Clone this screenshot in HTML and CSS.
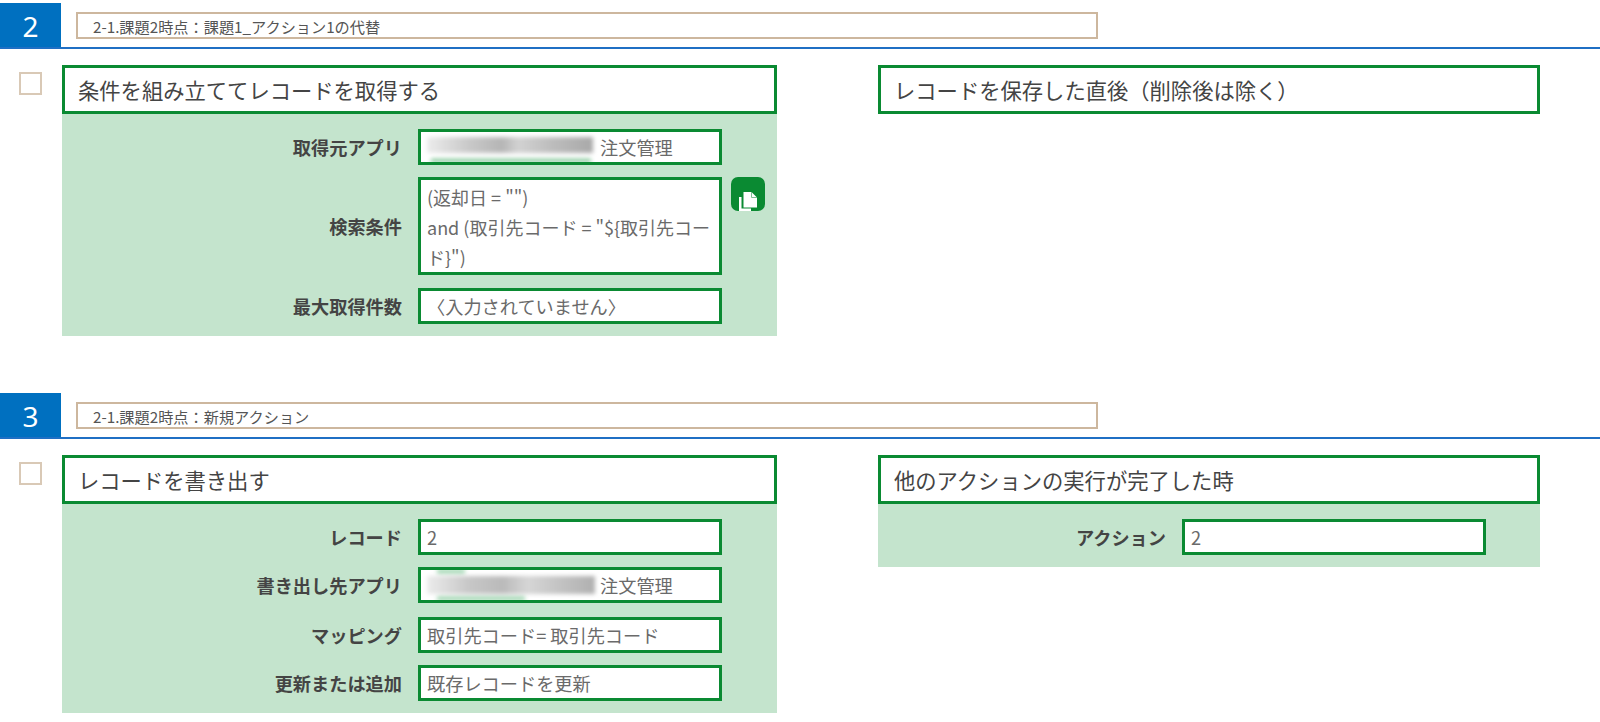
FILE: index.html
```html
<!DOCTYPE html>
<html lang="ja">
<head>
<meta charset="utf-8">
<title>Actions</title>
<link rel="stylesheet" href="styles.css">
</head>
<body>
<section class="step step-first">
  <header class="step-head">
    <div class="step-no">2</div>
    <div class="step-title">2-1.課題2時点：課題1_アクション1の代替</div>
  </header>
  <div class="step-body">
    <div class="check"></div>
    <div class="card card-left">
      <h2 class="card-head">条件を組み立ててレコードを取得する</h2>
      <div class="card-body">
        <div class="row">
          <div class="label">取得元アプリ</div>
          <div class="field"><span class="smear smear-a"></span><span>注文管理</span></div>
        </div>
        <div class="row">
          <div class="label">検索条件</div>
          <div class="field field-multi">(返却日 = "")<br>and (取引先コード = "${取引先コード}")</div>
          <button class="copy" type="button" aria-label="copy">
            <svg viewBox="0 0 34 34" width="34" height="34"><path class="doc" d="M8 20H10.500V31.500H20V34H8Z"/><path class="doc" d="M12.500 15H20.500L26 20.500V30.500H12.500Z"/><path class="fold" d="M20.500 15V20.500H26"/></svg>
          </button>
        </div>
        <div class="row row-nudged">
          <div class="label">最大取得件数</div>
          <div class="field">〈入力されていません〉</div>
        </div>
      </div>
    </div>
    <div class="card card-right">
      <h2 class="card-head">レコードを保存した直後（削除後は除く）</h2>
    </div>
  </div>
</section>
<section class="step">
  <header class="step-head">
    <div class="step-no">3</div>
    <div class="step-title">2-1.課題2時点：新規アクション</div>
  </header>
  <div class="step-body">
    <div class="check"></div>
    <div class="card card-left">
      <h2 class="card-head">レコードを書き出す</h2>
      <div class="card-body">
        <div class="row">
          <div class="label">レコード</div>
          <div class="field">2</div>
        </div>
        <div class="row">
          <div class="label">書き出し先アプリ</div>
          <div class="field"><span class="smear smear-b"></span><span>注文管理</span></div>
        </div>
        <div class="row row-shifted">
          <div class="label">マッピング</div>
          <div class="field">取引先コード= 取引先コード</div>
        </div>
        <div class="row">
          <div class="label">更新または追加</div>
          <div class="field">既存レコードを更新</div>
        </div>
      </div>
    </div>
    <div class="card card-right">
      <h2 class="card-head">他のアクションの実行が完了した時</h2>
      <div class="card-body">
        <div class="row">
          <div class="label">アクション</div>
          <div class="field">2</div>
        </div>
      </div>
    </div>
  </div>
</section>
</body>
</html>
```
FILE: styles.css
```css
* { box-sizing: border-box; }
html, body { margin: 0; padding: 0; background: #fff; }
body {
  font-family: "Noto Sans CJK JP", "Noto Sans", sans-serif;
  color: #444;
  height: 722px;
  overflow: hidden;
}
.step { margin-top: 57px; }
.step-first { margin-top: 3px; }
.step-head {
  display: flex;
  align-items: center;
  height: 46px;
  border-bottom: 2px solid #1f6fc4;
}
.step-no {
  width: 61px;
  height: 44px;
  background: #0070c0;
  color: #fff;
  font-family: "Noto Sans", sans-serif;
  font-size: 28px;
  line-height: 46px;
  text-align: center;
}
.step-title {
  width: 1022px;
  height: 27px;
  margin-left: 15px;
  padding-left: 15px;
  border: 2px solid #cdb79e;
  font-size: 15.2px;
  line-height: 24px;
  color: #555;
}
.step-body {
  display: flex;
  align-items: flex-start;
  padding: 16px 0 0 19px;
}
.check {
  width: 23px;
  height: 23px;
  margin-top: 7px;
  border: 2px solid #d9c9b6;
}
.card-left { width: 715px; margin-left: 20px; }
.card-right { width: 662px; margin-left: 101px; }
.card-head {
  height: 49px;
  margin: 0;
  padding-left: 13px;
  border: 3px solid #0a8a32;
  background: #fff;
  font-size: 21.3px;
  font-weight: 400;
  line-height: 44px;
  color: #444;
}
.card-body {
  display: flex;
  flex-direction: column;
  gap: 12px;
  padding: 15px 0 12px;
  background: #c4e4cd;
}
.row {
  display: grid;
  grid-template-columns: 340px 304px 43px;
  column-gap: 16px;
  align-items: center;
}
.row-shifted { margin-top: 2px; }
.row-nudged { margin-top: 1px; }
.card-right .row { grid-template-columns: 288px 304px; }
.label {
  font-size: 18.2px;
  font-weight: 700;
  text-align: right;
  color: #444;
}
.field {
  display: flex;
  align-items: center;
  min-height: 36px;
  padding: 0 0 0 6px;
  border: 3px solid #0a8a32;
  background: #fff;
  font-size: 18.2px;
  line-height: 30px;
  color: #6a6a6a;
  overflow: hidden;
}
.field-multi { display: block; height: 98px; padding: 2px 0 0 6px; font-size: 18px; }
.smear {
  flex: none;
  width: 172px;
  height: 30px;
  margin: 0 5px 0 -4px;
  background-repeat: no-repeat;
  filter: blur(2px);
}
.smear-a {
  background-image:
    linear-gradient(#6dbd86, #6dbd86),
    linear-gradient(90deg, #ececec 0, #c9c9c9 25%, #b5b5b5 45%, #d2d2d2 55%, #bdbdbd 75%, #a9a9a9 100%);
  background-size: 160px 3px, 166px 16px;
  background-position: 8px 27px, 4px 5px;
}
.smear-b {
  background-image:
    linear-gradient(#7cc794, #7cc794),
    linear-gradient(#7cc794, #7cc794),
    linear-gradient(90deg, #ececec 0, #c7c7c7 25%, #bababa 45%, #d6d6d6 60%, #c2c2c2 80%, #b0b0b0 100%);
  background-size: 28px 3px, 88px 3px, 168px 18px;
  background-position: 14px 0, 14px 27px, 4px 6px;
}
.copy {
  justify-self: start;
  align-self: start;
  width: 34px;
  height: 34px;
  margin-left: -7px;
  padding: 0;
  border: 0;
  border-radius: 7px;
  background: #0a8a32;
}
.copy svg { display: block; }
.doc { fill: #fff; }
.fold { fill: none; stroke: #7fbf95; stroke-width: 1; }
```
